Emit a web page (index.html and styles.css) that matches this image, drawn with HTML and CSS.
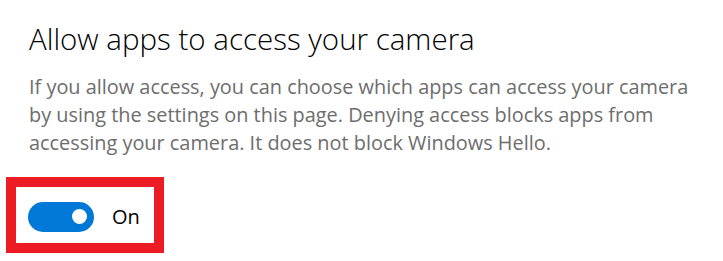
FILE: index.html
```html
<!DOCTYPE html>
<html>
<head>
<meta charset="utf-8">
<link rel="stylesheet" href="styles.css">
</head>
<body>
<div class="page">
  <h1 class="title">Allow apps to access your camera</h1>
  <p class="desc">If you allow access, you can choose which apps can access your camera by using the settings on this page. Denying access blocks apps from accessing your camera. It does not block Windows Hello.</p>
  <div class="highlight">
    <div class="toggle"><span class="knob"></span></div>
    <span class="state">On</span>
  </div>
</div>
</body>
</html>
```
FILE: styles.css
```css
html, body {
  margin: 0;
  padding: 0;
  background: #ffffff;
}
.page {
  width: 723px;
  height: 261px;
  box-sizing: border-box;
  padding: 19px 0 0 29px;
  font-family: "Open Sans", "Noto Sans", sans-serif;
}
.title {
  margin: 0;
  font-size: 29.5px;
  font-weight: 300;
  line-height: 40px;
  color: #000000;
}
.desc {
  margin: 14px 0 0 0;
  width: 672px;
  font-size: 19.9px;
  line-height: 28px;
  color: #6d6d6d;
}
.highlight {
  margin: 20px 0 0 -23px;
  width: 126px;
  height: 56px;
  border: 10px solid #ed1c24;
  display: flex;
  align-items: center;
  padding-left: 12px;
  gap: 18px;
}
.toggle {
  width: 66px;
  height: 30px;
  border-radius: 15px;
  background: #0078d7;
  display: flex;
  align-items: center;
  justify-content: flex-end;
  padding-right: 7px;
  box-sizing: border-box;
  margin-top: 3px;
}
.knob {
  width: 15px;
  height: 15px;
  border-radius: 50%;
  background: #ffffff;
}
.state {
  font-size: 20px;
  color: #000000;
  margin-top: 3px;
}
```
